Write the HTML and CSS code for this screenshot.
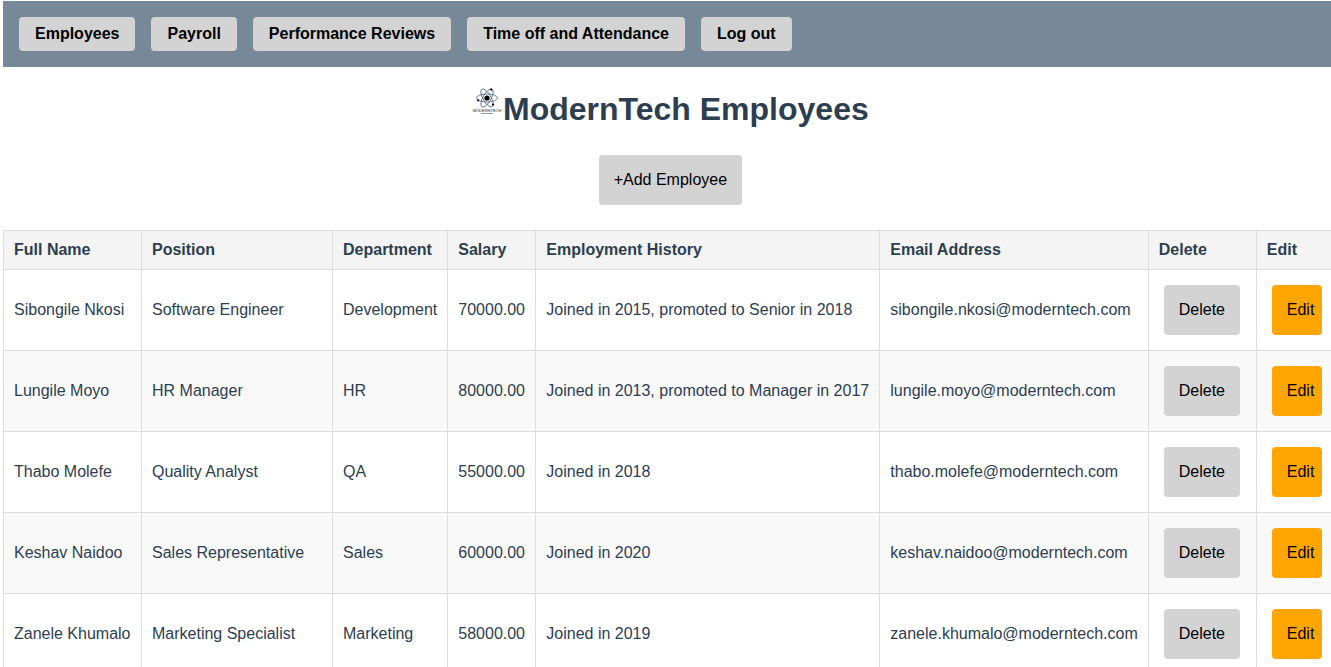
FILE: index.html
```html
<!DOCTYPE html>
<html lang="en">
<head>
<meta charset="utf-8">
<meta name="viewport" content="width=device-width, initial-scale=1">
<title>ModernTech Employees</title>
<link rel="stylesheet" href="styles.css">
</head>
<body>
<div class="page">
  <nav class="navbar">
    <a class="nav-link" href="#employees">Employees</a>
    <a class="nav-link" href="#payroll">Payroll</a>
    <a class="nav-link" href="#reviews">Performance Reviews</a>
    <a class="nav-link" href="#attendance">Time off and Attendance</a>
    <a class="nav-link" href="#logout">Log out</a>
  </nav>
  <main class="content">
    <h1 class="title">
      <svg class="logo" viewBox="0 0 31 31" aria-hidden="true">
        <g fill="none" stroke="#4c6585" stroke-width="0.8">
          <ellipse cx="15" cy="11" rx="10.5" ry="4"/>
          <ellipse cx="15" cy="11" rx="10.2" ry="4" transform="rotate(60 15 11)"/>
          <ellipse cx="15" cy="11" rx="10.2" ry="4" transform="rotate(120 15 11)"/>
        </g>
        <circle cx="15" cy="11" r="2.6"/>
        <circle cx="19.3" cy="2.6" r="1.1"/>
        <circle cx="6.2" cy="13.4" r="1.1"/>
        <circle cx="21" cy="17.6" r="1.1"/>
        <text class="logo-name" x="15" y="24.5" text-anchor="middle">MODERNTECH</text>
        <text class="logo-tag" x="15" y="26.5" text-anchor="middle">SOLUTIONS</text>
      </svg>
      <span>ModernTech Employees</span>
    </h1>
    <button class="btn" type="button">+Add Employee</button>
    <table class="employees">
      <colgroup>
        <col class="col-name"><col class="col-position"><col class="col-department"><col class="col-salary"><col class="col-history"><col class="col-email"><col class="col-delete"><col class="col-edit">
      </colgroup>
      <thead>
        <tr><th>Full Name</th><th>Position</th><th>Department</th><th>Salary</th><th>Employment History</th><th>Email Address</th><th>Delete</th><th>Edit</th></tr>
      </thead>
      <tbody>
        <tr><td>Sibongile Nkosi</td><td>Software Engineer</td><td>Development</td><td>70000.00</td><td>Joined in 2015, promoted to Senior in 2018</td><td>sibongile.nkosi@moderntech.com</td><td><button class="btn" type="button">Delete</button></td><td><button class="btn btn-edit" type="button">Edit</button></td></tr>
        <tr><td>Lungile Moyo</td><td>HR Manager</td><td>HR</td><td>80000.00</td><td>Joined in 2013, promoted to Manager in 2017</td><td>lungile.moyo@moderntech.com</td><td><button class="btn" type="button">Delete</button></td><td><button class="btn btn-edit" type="button">Edit</button></td></tr>
        <tr><td>Thabo Molefe</td><td>Quality Analyst</td><td>QA</td><td>55000.00</td><td>Joined in 2018</td><td>thabo.molefe@moderntech.com</td><td><button class="btn" type="button">Delete</button></td><td><button class="btn btn-edit" type="button">Edit</button></td></tr>
        <tr><td>Keshav Naidoo</td><td>Sales Representative</td><td>Sales</td><td>60000.00</td><td>Joined in 2020</td><td>keshav.naidoo@moderntech.com</td><td><button class="btn" type="button">Delete</button></td><td><button class="btn btn-edit" type="button">Edit</button></td></tr>
        <tr><td>Zanele Khumalo</td><td>Marketing Specialist</td><td>Marketing</td><td>58000.00</td><td>Joined in 2019</td><td>zanele.khumalo@moderntech.com</td><td><button class="btn" type="button">Delete</button></td><td><button class="btn btn-edit" type="button">Edit</button></td></tr>
      </tbody>
    </table>
  </main>
</div>
</body>
</html>
```
FILE: styles.css
```css
html {
  overflow-x: hidden;
}

body {
  margin: 1px 0 0 3px;
  background: #fff;
  color: #2c3e50;
  font: 16px/18px "Liberation Sans", Arial, sans-serif;
}

.page {
  width: max-content;
  min-width: 100%;
}

.navbar {
  display: flex;
  gap: 16px;
  padding: 16px;
  background: #778899;
}

.nav-link {
  padding: 8px 16px;
  border-radius: 4px;
  background: #d3d3d3;
  color: #000;
  font-weight: bold;
  text-decoration: none;
}

.content {
  display: flex;
  flex-direction: column;
  align-items: center;
}

.title {
  display: flex;
  justify-content: center;
  align-items: flex-start;
  margin: 20px 0 19px;
  font-size: 32px;
  line-height: 44px;
}

.logo {
  width: 31px;
  height: 31px;
  overflow: visible;
}

.logo-name {
  font-size: 4px;
  font-weight: normal;
  fill: #222;
}

.logo-tag {
  font-size: 2px;
  font-weight: bold;
  fill: #000;
}

.btn {
  margin: 5px;
  padding: 15px;
  border: 0;
  border-radius: 4px;
  background: #d3d3d3;
  color: #000;
  font: inherit;
  line-height: 20px;
  white-space: nowrap;
  cursor: pointer;
}

.btn-edit {
  width: 50px;
  background: #ffa500;
}

.employees {
  width: 100%;
  margin-top: 20px;
  border-collapse: collapse;
  white-space: nowrap;
}

.employees th,
.employees td {
  padding: 10px;
  border: 1px solid #ddd;
  text-align: left;
}

.employees td .btn {
  display: block;
}

.employees th {
  background: #f4f4f4;
}

.employees tbody tr:nth-child(even) {
  background: #f9f9f9;
}

.col-name {
  width: 138px;
}

.col-position {
  width: 191px;
}

.col-department {
  width: 115px;
}

.col-salary {
  width: 88px;
}

.col-history {
  width: 344px;
}

.col-email {
  width: 268px;
}

.col-delete {
  width: 108px;
}

.col-edit {
  width: 81px;
}
```
